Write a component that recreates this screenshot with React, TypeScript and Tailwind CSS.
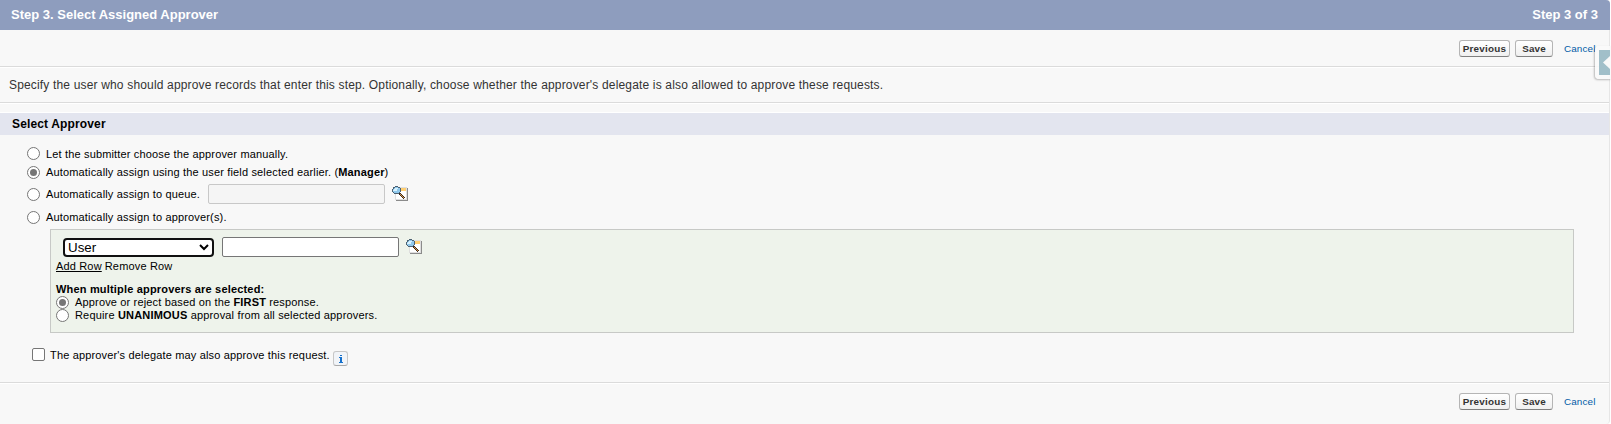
import React from "react";

function Radio({ on = false }: { on?: boolean }) {
  return (
    <span role="radio" aria-checked={on} className="flex size-[13px] shrink-0 items-center justify-center rounded-full border border-[#767676] bg-white">
      {on && <span className="size-[7px] rounded-full bg-[#767676]" />}
    </span>
  );
}

function LookupIcon() {
  return (
    <svg width="16" height="16" viewBox="0 0 16 16" shapeRendering="crispEdges" className="shrink-0">
      <path d="M4 14h11V2h1v13H4z" fill="#8b8b8b" />
      <path d="M3 1h12v13H3z" fill="#dedede" />
      <path d="M4 2h10v11H4z" fill="#fff" />
      <path d="M9 2h5v3H9z" fill="#ffcf73" />
      <path d="M3 0h3v1H3zM1 1h2v1H1zM6 1h2v1H6zM1 2h1v1H1zM0 3h1v3H0zM8 2h1v4H8zM1 6h1v1H1zM7 6h1v1H7zM2 7h5v1H2z" fill="#4c6172" />
      <path d="M3 1h3v1H3zM2 2h6v4H2zM1 3h1v3H1zM2 6h5v1H2z" fill="#8fc8ec" />
      <path d="M3 2h3v1H3zM2 3h3v2H2zM1 4h1v1H1z" fill="#d6f0fd" />
      <path d="M7 7h2v1H7zM8 8h2v1H8zM9 9h2v1H9zM10 10h2v1h-2zM11 11h2v1h-2zM7 8h1v1H7zM8 9h1v1H8zM9 10h1v1H9zM10 11h1v1h-1zM11 12h1v1h-1z" fill="#3b2a20" />
      <path d="M8 8h1v1H8zM9 9h1v1H9zM10 10h1v1h-1zM11 11h1v1h-1z" fill="#d89a4a" />
    </svg>
  );
}

function Actions() {
  const button =
    "flex h-[17px] items-center justify-center rounded-[3px] border border-[#b5b5b5] border-b-[#7f7f7f] bg-linear-to-b from-white to-[#f0f0f0] text-[9.9px] font-bold text-[#333]";
  return (
    <div className="flex justify-end">
      <button className={`${button} mr-[5px] w-[51px] tracking-[0.22px]`}>Previous</button>
      <button className={`${button} mr-[11px] w-[38px] tracking-[0.1px]`}>Save</button>
      <a className="flex w-[45px] items-center text-[9.9px] tracking-[0.12px] text-[#015ba7]">Cancel</a>
    </div>
  );
}

export default function App() {
  return (
    <div className="relative h-[424px] w-[1611px] overflow-hidden bg-white font-['Liberation_Sans',Arial,sans-serif] text-[11px] leading-[13px] text-black">
      <div className="flex h-full w-[1610px] flex-col rounded-tr-[4px] rounded-br-[4px] border-r border-[#e6e6e6] bg-[#f8f8f8]">
        <header className="-mr-px flex h-[30px] shrink-0 items-center justify-between rounded-tr-[4px] bg-[#8e9dbe] pr-[12px] pb-[1px] pl-[11px] text-[13px] font-bold text-white">
          <h1>Step 3. Select Assigned Approver</h1>
          <span>Step 3 of 3</span>
        </header>
        <div className="h-[37px] shrink-0 border-b border-[#dbdbdb] pt-[10px]">
          <Actions />
        </div>
        <p className="flex h-[36px] shrink-0 items-center border-t border-b border-t-white border-b-[#dbdbdb] pl-[9px] text-[12px] tracking-[0.166px] text-[#333]">
          Specify the user who should approve records that enter this step. Optionally, choose whether the approver's delegate is also allowed to approve these requests.
        </p>
        <div className="h-[9px] shrink-0 border-t border-white" />
        <h2 className="flex h-[23px] shrink-0 items-center border-t border-white bg-[#e3e5ef] pl-[12px] text-[12px] font-bold tracking-[0.14px]">Select Approver</h2>
        <div className="flex shrink-0 flex-col tracking-[0.16px]">
          <div className="mt-[12px] flex h-[13px] items-center pl-[27px]">
            <Radio />
            <span className="ml-[6px] pt-[1px]">Let the submitter choose the approver manually.</span>
          </div>
          <div className="mt-[6px] flex h-[13px] items-center pl-[27px]">
            <Radio on />
            <span className="ml-[6px]">Automatically assign using the user field selected earlier. (<b>Manager</b>)</span>
          </div>
          <div className="mt-[5px] flex h-[20px] items-center pl-[27px]">
            <Radio />
            <span className="ml-[6px] w-[162px]">Automatically assign to queue.</span>
            <span className="h-[20px] w-[177px] rounded-[2px] border border-[#c8c8c8] bg-[#f5f5f5]" />
            <span className="ml-[7px]"><LookupIcon /></span>
          </div>
          <div className="mt-[7px] flex h-[13px] items-center pl-[27px]">
            <Radio />
            <span className="ml-[6px]">Automatically assign to approver(s).</span>
          </div>
          <section className="mt-[5px] ml-[50px] flex h-[104px] w-[1524px] flex-col border border-[#c7c9c6] bg-[#eef3eb] pl-[5px]">
            <div className="mt-[7px] flex h-[20px] items-center">
              <span className="ml-[7px] flex h-[19px] w-[151px] items-center justify-between rounded-[4px] border-2 border-[#101010] bg-white pr-[3px] pl-[3px] text-[13.33px] tracking-normal">
                User
                <svg width="10" height="7" viewBox="0 0 10 7" fill="none" stroke="#000" strokeWidth="2">
                  <path d="M1 1l4 4 4-4" />
                </svg>
              </span>
              <span className="ml-[8px] h-[20px] w-[177px] rounded-[2px] border border-[#767676] bg-white" />
              <span className="ml-[7px]"><LookupIcon /></span>
            </div>
            <div className="mt-[3px] flex gap-[3px]">
              <span className="underline">Add Row</span>
              <span>Remove Row</span>
            </div>
            <b className="mt-[10px] tracking-[0.18px]">When multiple approvers are selected:</b>
            <div className="flex h-[13px] items-center">
              <Radio on />
              <span className="ml-[6px]">Approve or reject based on the <b>FIRST</b> response.</span>
            </div>
            <div className="flex h-[13px] items-center tracking-[0.175px]">
              <Radio />
              <span className="ml-[6px]">Require <b>UNANIMOUS</b> approval from all selected approvers.</span>
            </div>
          </section>
          <div className="mt-[15px] flex h-[17px] items-start pl-[32px]">
            <span role="checkbox" aria-checked={false} className="size-[13px] rounded-[2px] border border-[#767676] bg-white" />
            <span className="ml-[5px] w-[283px] pt-[1px]">The approver's delegate may also approve this request.</span>
            <span className="mt-[3px] flex h-[15px] w-[15px] shrink-0 items-center justify-center rounded-[3px] border border-[#c7c7c7] border-b-[#a9a9a9] bg-[#f1f4f8]">
              <svg width="5" height="8" viewBox="0 0 5 8" fill="#1470cc" shapeRendering="crispEdges">
                <path d="M2 0h2v1H2zM1 2h3v5h1v1H1V7h1V3H1z" />
              </svg>
            </span>
          </div>
        </div>
        <div className="mt-[17px] h-px shrink-0 bg-[#dbdbdb]" />
        <footer className="flex-1 border-t border-white pt-[9px]">
          <Actions />
        </footer>
      </div>
      <div className="absolute top-[46px] right-0 h-[33px] w-[16px] rounded-l-[4px] bg-[#fafafa]/90 shadow-[-1px_1px_2px_rgba(0,0,0,0.25)]">
        <div className="mt-[4px] ml-[4px] flex h-[25px] w-[11px] items-center justify-end bg-[#a1bfc9]">
          <svg width="7" height="13" viewBox="0 0 7 13"><path d="M7 0v13L0 6.5z" fill="#f8f8f8" /></svg>
        </div>
      </div>
    </div>
  );
}
